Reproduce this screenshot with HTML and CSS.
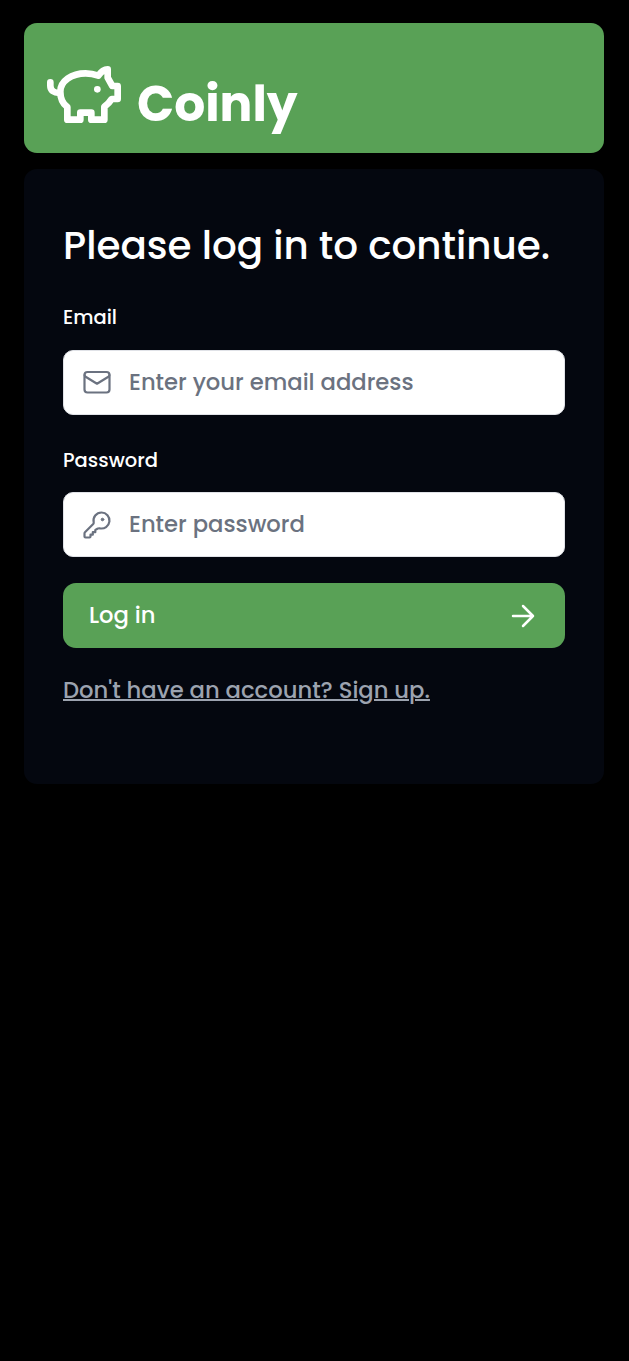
FILE: index.html
```html
<!DOCTYPE html>
<html lang="en">
<head>
<meta charset="utf-8">
<title>Coinly</title>
<link rel="stylesheet" href="styles.css">
</head>
<body>
<main class="page">
  <header class="brand">
    <svg class="brand-icon" viewBox="18 30 228 177" fill="none" stroke="currentColor" stroke-width="20" stroke-linecap="round" stroke-linejoin="round">
      <path d="M31 82V92C31 107 42 114 58 114"/>
      <path d="M175 62C183 50 192 43 203 43V68L217 93H233V132H215C208 144 200 150 193 155V194H154V173H121V194H82V156C68 146 61 130 61 110C61 78 95 55 137 55C152 55 164 58 175 62Z"/>
      <circle cx="172" cy="103" r="10" fill="currentColor" stroke="none"/>
    </svg>
    <span class="brand-name">Coinly</span>
  </header>
  <form class="card">
    <h1 class="title">Please log in to continue.</h1>
    <label class="label" for="email">Email</label>
    <div class="field">
      <svg class="field-icon field-icon-mail" viewBox="0 0 28 28" fill="none" stroke="currentColor" stroke-width="2.200" stroke-linejoin="round">
        <rect x="1.500" y="4" width="25" height="20.500" rx="3"/>
        <path d="M1.500 6.500C1.500 7.700 2.100 8.500 3 9L14 15.700L25 9C25.900 8.500 26.500 7.700 26.500 6.500"/>
      </svg>
      <input class="input" id="email" type="email" placeholder="Enter your email address">
    </div>
    <label class="label" for="password">Password</label>
    <div class="field">
      <svg class="field-icon field-icon-key" viewBox="0 0 28 28" fill="none" stroke="currentColor" stroke-width="2.200" stroke-linecap="round" stroke-linejoin="round">
        <path d="M18.500 1.500A8 8 0 0 0 10.700 11.300C10.800 12 10.600 12.500 10.200 13L2.200 21Q1.500 21.700 1.500 22.500V25.500Q1.500 26.500 2.500 26.500H6.500Q7.500 26.500 7.500 25.500V23.700H9.800V21.200H12.300V18.900L14.800 17.600C15.300 17.200 16 17.200 16.700 17.300A8 8 0 1 0 18.500 1.500Z"/>
        <circle cx="19.500" cy="8.500" r="1.300" fill="currentColor" stroke-width="1"/>
      </svg>
      <input class="input" id="password" type="password" placeholder="Enter password">
    </div>
    <button class="submit" type="button">
      <span>Log in</span>
      <svg class="arrow" viewBox="0 0 24 24" fill="none" stroke="currentColor" stroke-width="2.500" stroke-linecap="round" stroke-linejoin="round">
        <path d="M2 12H22M12 2L22 12L12 22"/>
      </svg>
    </button>
    <a class="signup" href="#">Don't have an account? Sign up.</a>
  </form>
</main>
</body>
</html>
```

FILE: styles.css
```css
* { box-sizing: border-box; }
body {
  margin: 0;
  background: #000;
  color: #fff;
  font-family: Poppins, Inter, "Open Sans", sans-serif;
  font-weight: 500;
}
.page {
  display: flex;
  flex-direction: column;
  gap: 16px;
  min-height: 1361px;
  padding: 23px 25px 0 24px;
}
.brand {
  display: flex;
  align-items: flex-start;
  gap: 15px;
  height: 130px;
  padding: 42px 22px 0;
  border-radius: 13px;
  background: #59a156;
}
.brand-icon { width: 76px; height: 59px; flex: none; }
.brand-name {
  margin-top: 9px;
  font-size: 48.750px;
  font-weight: 700;
  line-height: 60px;
}
.card {
  display: flex;
  flex-direction: column;
  height: 615px;
  padding: 51px 39px 0;
  border-radius: 13px;
  background: #04070f;
}
.title {
  margin: 0;
  font-size: 38.900px;
  font-weight: 500;
  line-height: 51px;
  white-space: nowrap;
}
.label {
  margin: 33px 0 18px;
  font-size: 19.500px;
  line-height: 28px;
}
.field + .label { margin: 32px 0 17px; }
.field {
  display: flex;
  align-items: center;
  gap: 18px;
  height: 65px;
  padding: 0 18px;
  border: 1.500px solid #e0e2e7;
  border-radius: 10px;
  background: #fff;
  color: #6b7280;
}
.field-icon { width: 28px; height: 28px; margin-left: 1px; flex: none; }
.field-icon-mail { margin-bottom: 1px; }
.field-icon-key { margin-top: 1px; }
.input {
  flex: 1;
  min-width: 0;
  height: 60px;
  padding: 0 0 1px;
  border: 0;
  outline: 0;
  background: none;
  font: inherit;
  font-size: 22.690px;
}
.input::placeholder { color: #6b7280; opacity: 1; }
.submit {
  display: flex;
  align-items: center;
  justify-content: space-between;
  height: 65px;
  margin-top: 26px;
  padding: 0 30px 0 26px;
  border: 0;
  border-radius: 13px;
  background: #59a156;
  color: #fff;
  font: inherit;
  font-size: 22.690px;
}
.submit span { padding-bottom: 1px; }
.arrow { width: 24px; height: 24px; }
.signup {
  align-self: flex-start;
  margin-top: 26px;
  color: #9ca3af;
  font-size: 22.690px;
  line-height: 32px;
  text-decoration: underline;
  text-decoration-thickness: 2px;
  white-space: nowrap;
}
```
